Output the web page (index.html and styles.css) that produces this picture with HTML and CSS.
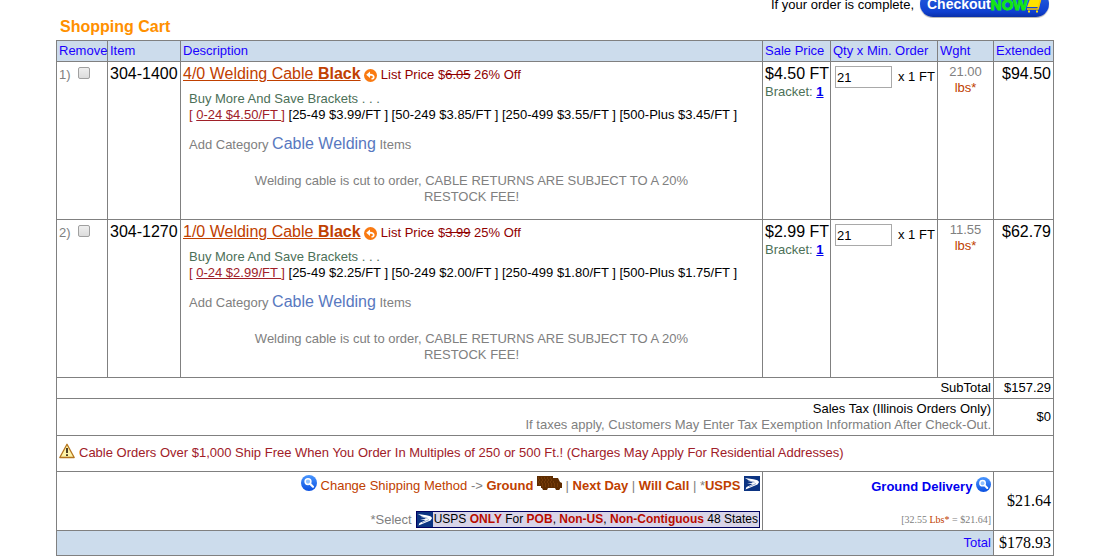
FILE: index.html
```html
<!DOCTYPE html>
<html lang="en">
<head>
  <meta charset="UTF-8">
  <meta name="viewport" content="width=device-width, initial-scale=1.0">
  <title>Shopping Cart</title>
  <link rel="stylesheet" href="styles.css">
</head>
<body>
  <!-- shared icons -->
  <svg class="icon-defs" width="0" height="0" aria-hidden="true">
    <defs>
      <linearGradient id="blue" x1="0" y1="0" x2="0" y2="1">
        <stop offset="0" stop-color="#4a97ff"/>
        <stop offset="1" stop-color="#0b50e0"/>
      </linearGradient>
    </defs>
    <symbol id="back" viewBox="0 0 13 13">
      <circle cx="6.5" cy="6.5" r="6.5" fill="#f97a12"/>
      <path d="M2.2 5.8L6 2.600v2.100c3 0 4.600 1.400 4.600 3.200 0 1.700-1.400 2.700-3.200 2.700V9.200c.9 0 1.500-.5 1.500-1.200 0-.8-.9-1.200-2.900-1.200v2.200z" fill="#fff"/>
    </symbol>
    <symbol id="search" viewBox="0 0 16 16">
      <circle cx="8" cy="8" r="8" fill="url(#blue)"/>
      <circle cx="7" cy="6.600" r="2.900" fill="#8fc0ff" stroke="#fff" stroke-width="1.500"/>
      <path d="M9.300 8.900l2.700 2.800" stroke="#fff" stroke-width="2.200" stroke-linecap="round"/>
    </symbol>
    <symbol id="usps" viewBox="0 0 16 15">
      <path d="M0 0h16v15H0z" fill="#0c3482"/>
      <path d="M1 2l8.500 1.200c3 .4 5.500 1.600 5.500 3L13.500 8.500 1.500 13.500l1-2.500 6-2.800L3 7.500l6-.5z" fill="#fff"/>
      <path d="M4 4.800l6.500 1.400M5 10.800l7-3.200" stroke="#7c93bd" stroke-width=".8"/>
    </symbol>
  </svg>

  <div class="topbar">
    <span>If your order is complete,</span>
    <button class="checkout-btn" type="button">Checkout<span class="now">NOW</span>
      <svg width="16" height="18" viewBox="0 0 16 18" aria-hidden="true">
        <path d="M3 4h11l-2 8H0z" fill="#ffe100"/>
        <path d="M0 14h11l3-11" fill="none" stroke="#ffc800" stroke-width="1.500"/>
        <path d="M1 16.500h2M9 16.500h2" stroke="#ffe100" stroke-width="2"/>
      </svg>
    </button>
  </div>

  <div class="container">
    <h1>Shopping Cart</h1>
    <table class="cart">
      <colgroup>
        <col class="col-remove">
        <col class="col-item">
        <col>
        <col class="col-price">
        <col class="col-qty">
        <col class="col-weight">
        <col class="col-extended">
      </colgroup>
      <thead>
        <tr>
          <th>Remove</th>
          <th>Item</th>
          <th>Description</th>
          <th>Sale Price</th>
          <th>Qty x Min. Order</th>
          <th>Wght</th>
          <th>Extended</th>
        </tr>
      </thead>
      <tbody>
        <tr class="item">
          <td class="remove"><label for="remove1">1)</label><input type="checkbox" id="remove1"></td>
          <td class="big">304-1400</td>
          <td>
            <div class="title">
              <a class="product" href="#">4/0 Welding Cable <b>Black</b></a>
              <svg class="back-icon" width="13" height="13"><use href="#back"/></svg>
              <span class="list-price">List Price $<s>6.05</s> 26% Off</span>
            </div>
            <div class="brackets">
              <span class="green">Buy More And Save Brackets . . .</span><br>
              <span class="current">[ <u>0-24 $4.50/FT </u>]</span> [25-49 $3.99/FT ] [50-249 $3.85/FT ] [250-499 $3.55/FT ] [500-Plus $3.45/FT ]
            </div>
            <div class="category">Add Category <a href="#">Cable Welding</a> Items</div>
            <div class="notice">Welding cable is cut to order, CABLE RETURNS ARE SUBJECT TO A 20% RESTOCK FEE!</div>
          </td>
          <td><div class="big">$4.50 FT</div><span class="green">Bracket:</span> <a class="bracket" href="#">1</a></td>
          <td><div class="qty"><input type="text" id="qty1" value="21"><label for="qty1">x 1 FT</label></div></td>
          <td class="weight">21.00<br><a href="#">lbs*</a></td>
          <td class="big right">$94.50</td>
        </tr>
        <tr class="item">
          <td class="remove"><label for="remove2">2)</label><input type="checkbox" id="remove2"></td>
          <td class="big">304-1270</td>
          <td>
            <div class="title">
              <a class="product" href="#">1/0 Welding Cable <b>Black</b></a>
              <svg class="back-icon" width="13" height="13"><use href="#back"/></svg>
              <span class="list-price">List Price $<s>3.99</s> 25% Off</span>
            </div>
            <div class="brackets">
              <span class="green">Buy More And Save Brackets . . .</span><br>
              <span class="current">[ <u>0-24 $2.99/FT </u>]</span> [25-49 $2.25/FT ] [50-249 $2.00/FT ] [250-499 $1.80/FT ] [500-Plus $1.75/FT ]
            </div>
            <div class="category">Add Category <a href="#">Cable Welding</a> Items</div>
            <div class="notice">Welding cable is cut to order, CABLE RETURNS ARE SUBJECT TO A 20% RESTOCK FEE!</div>
          </td>
          <td><div class="big">$2.99 FT</div><span class="green">Bracket:</span> <a class="bracket" href="#">1</a></td>
          <td><div class="qty"><input type="text" id="qty2" value="21"><label for="qty2">x 1 FT</label></div></td>
          <td class="weight">11.55<br><a href="#">lbs*</a></td>
          <td class="big right">$62.79</td>
        </tr>
        <tr>
          <td class="right" colspan="6">SubTotal</td>
          <td class="right">$157.29</td>
        </tr>
        <tr>
          <td class="right" colspan="6">Sales Tax (Illinois Orders Only)<br><span class="grey">If taxes apply, Customers May Enter Tax Exemption Information After Check-Out.</span></td>
          <td class="right">$0</td>
        </tr>
        <tr>
          <td colspan="7">
            <div class="warning">
              <svg width="16" height="16" viewBox="0 0 16 16" aria-hidden="true">
                <path d="M8 1.200L15.200 14.500H.8z" fill="#fdf3a8" stroke="#b5751f" stroke-width="1.300" stroke-linejoin="round"/>
                <path d="M8 5v5M8 11.200v1.800" stroke="#3c2a14" stroke-width="1.800"/>
              </svg>
              <span>Cable Orders Over $1,000 Ship Free When You Order In Multiples of 250 or 500 Ft.! (Charges May Apply For Residential Addresses)</span>
            </div>
          </td>
        </tr>
        <tr>
          <td class="right" colspan="3">
            <div class="methods">
              <svg class="raised" width="16" height="16"><use href="#search"/></svg>
              <a href="#">Change Shipping Method</a> -&gt; <a href="#"><b>Ground</b></a>
              <svg class="raised" width="25" height="16" viewBox="0 0 25 16" aria-hidden="true">
                <path d="M0 1h16v2h5l2 4 2 1v5h-2v1l-1 1h-3l-1-2h-7l-1 2H6l-1-2H4v-2H0z" fill="#5e2c00"/>
                <path d="M1 3h14M2 5h14M1 7h17M2 9h21M5 11h18" stroke="#8a4a10" stroke-dasharray="1 2"/>
              </svg>
              | <a href="#"><b>Next Day</b></a> | <a href="#"><b>Will Call</b></a> | *<a href="#"><b>USPS</b></a>
              <svg class="raised" width="16" height="15"><use href="#usps"/></svg>
            </div>
            <div class="select">
              <span>*Select</span>
              <a class="usps-banner" href="#"><svg width="16" height="15"><use href="#usps"/></svg><span>USPS <b>ONLY</b> For <b>POB</b>, <b>Non-US</b>, <b>Non-Contiguous</b> 48 States</span></a>
            </div>
          </td>
          <td class="right" colspan="3">
            <div class="delivery"><b>Ground Delivery</b> <svg class="raised" width="15" height="15"><use href="#search"/></svg></div>
            <div class="rate">[32.55 <a href="#">Lbs*</a> = $21.64]</div>
          </td>
          <td class="amount">$21.64</td>
        </tr>
        <tr class="total">
          <td class="right" colspan="6">Total</td>
          <td class="amount">$178.93</td>
        </tr>
      </tbody>
    </table>
  </div>
</body>
</html>
```
FILE: styles.css
```css
body {
  margin: 0;
  font-family: "Liberation Sans", Arial, sans-serif;
  font-size: 13px;
  line-height: 16px;
  color: #000;
  background-color: #fff;
}

a {
  color: #c04000;
  text-decoration: none;
}

.icon-defs {
  position: absolute;
}

.topbar {
  display: flex;
  justify-content: flex-end;
  align-items: flex-end;
  gap: 6px;
  height: 18px;
  padding-right: 63px;
  overflow: hidden;
}

.topbar > span {
  padding-bottom: 5px;
}

.checkout-btn {
  display: flex;
  align-items: center;
  flex-shrink: 0;
  width: 129px;
  height: 26px;
  margin-bottom: 1px;
  padding: 0 0 0 7px;
  border: none;
  border-radius: 13px;
  background: linear-gradient(#2a62e0, #0f40d0 80%, #0a30a8);
  box-shadow: 0 1px 1px #b0b0b0;
  color: #fff;
  font-family: inherit;
  font-size: 14px;
  font-weight: bold;
}

.now {
  font-size: 15px;
  color: #14e614;
  -webkit-text-stroke: 1px #14e614;
}

.container {
  margin: 0 58px 0 56px;
}

h1 {
  margin: 0;
  padding: 0 0 4px 4px;
  font-size: 16px;
  line-height: 18px;
  color: #ff9000;
}

.cart {
  width: 100%;
  table-layout: fixed;
  border-collapse: collapse;
}

.col-remove { width: 51px; }
.col-item { width: 73px; }
.col-price { width: 68px; }
.col-qty { width: 107px; }
.col-weight { width: 56px; }
.col-extended { width: 60px; }

.cart th,
.cart td {
  padding: 2px;
  border: 1px solid #808080;
  white-space: nowrap;
}

.cart th {
  background-color: #ccdcec;
  color: #1a00ff;
  font-weight: normal;
  text-align: left;
}

.item td {
  vertical-align: top;
}

.cart .big {
  font-size: 16px;
  line-height: 20px;
}

.cart .right {
  text-align: right;
}

.grey {
  color: #808080;
}

.green {
  color: #4c7058;
}

.remove {
  color: #808080;
}

.remove label {
  display: inline-block;
  padding-top: 3px;
}

.remove input {
  appearance: none;
  width: 12px;
  height: 12px;
  margin: 0 0 0 7px;
  border: 1px solid #a0a0a0;
  border-radius: 2px;
  background: linear-gradient(#efefef, #dcdcdc);
}

.title {
  line-height: 20px;
}

.product {
  font-size: 16px;
  text-decoration: underline;
}

.back-icon {
  vertical-align: -3px;
}

.list-price {
  color: #900000;
}

.brackets {
  padding: 6px 0 0 6px;
}

.current {
  color: #a02028;
}

.category {
  padding: 12px 0 0 6px;
  line-height: 18px;
  color: #808080;
}

.category a {
  color: #5878c0;
  font-size: 16px;
}

.notice {
  padding: 19px 60px 12px;
  color: #808080;
  text-align: center;
  white-space: normal;
}

.bracket {
  color: #0000ee;
  font-weight: bold;
  text-decoration: underline;
}

.qty {
  display: flex;
  align-items: center;
  gap: 6px;
  padding: 2px 0 0 2px;
}

.qty input {
  box-sizing: border-box;
  width: 57px;
  height: 22px;
  padding: 0 1px;
  border: 1px solid #a9a9a9;
  font-family: inherit;
  font-size: 13px;
}

.weight {
  color: #808080;
  text-align: center;
}

.warning {
  display: flex;
  gap: 4px;
  padding: 5px 0 8px;
}

.warning span {
  padding-top: 2px;
  color: #a02028;
}

.raised {
  vertical-align: -1px;
}

.methods,
.select {
  color: #808080;
}

.methods {
  padding: 1px 0 17px;
}

.select {
  display: flex;
  justify-content: flex-end;
  align-items: center;
  gap: 4px;
}

.usps-banner {
  display: flex;
  align-items: center;
  gap: 1px;
  padding-right: 1px;
  border: 1px solid #000060;
  background-color: #d8d4e8;
  color: #000;
  font-size: 12px;
  line-height: 15px;
}

.usps-banner b {
  color: #b80c00;
}

.delivery {
  padding: 2px 0 17px;
  color: #0000ee;
}

.rate {
  color: #808080;
  font-family: "Liberation Serif", "Times New Roman", serif;
  font-size: 10px;
}

.amount {
  font-family: "Liberation Serif", "Times New Roman", serif;
  font-size: 16px;
  line-height: 20px;
  text-align: right;
}

.total td:first-child {
  background-color: #ccdcec;
  color: #1a00ff;
}
```
